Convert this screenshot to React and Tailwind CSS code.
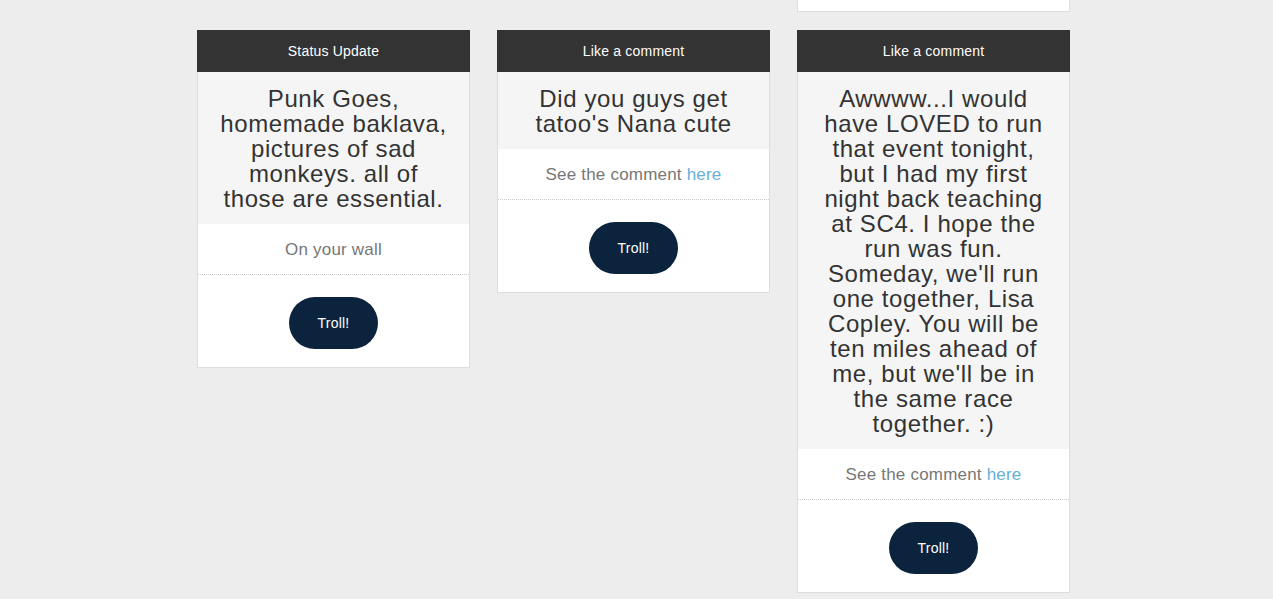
import React from 'react';

const cards = [
  [
    {
      title: 'Status Update',
      text: 'Punk Goes, homemade baklava, pictures of sad monkeys. all of those are essential.',
      wall: true,
    },
  ],
  [
    {
      title: 'Like a comment',
      text: "Did you guys get tatoo's Nana cute",
    },
  ],
  [
    {
      title: 'Like a comment',
      text: "Awwww...I would have LOVED to run that event tonight, but I had my first night back teaching at SC4. I hope the run was fun. Someday, we'll run one together, Lisa Copley. You will be ten miles ahead of me, but we'll be in the same race together. :)",
    },
  ],
];

const Card = ({ title, text, wall }) => (
  <div className="w-[273px] mb-[18px]">
    <div className="h-[42px] pt-px bg-[#333333] text-white text-[14px] tracking-[0.2px] flex items-center justify-center">
      {title}
    </div>
    <div className="border-x border-b border-[#dddddd] bg-white">
      <div className="bg-[#f5f5f5] text-[#333333] text-[24px] leading-[25px] tracking-[0.6px] text-center px-5 pt-[14px] pb-[13px]">
        {text}
      </div>
      <div className="h-[51px] pt-px border-b border-dotted border-[#cccccc] flex items-center justify-center text-[17px] tracking-[0.2px] text-[#777777]">
        {wall ? (
          'On your wall'
        ) : (
          <span>
            See the comment <a className="text-[#67afd8]">here</a>
          </span>
        )}
      </div>
      <div className="flex justify-center pt-[22px] pb-[18px]">
        <button className="w-[89px] h-[52px] rounded-full bg-[#0c233d] text-white text-[14px] tracking-[0.2px]">
          Troll!
        </button>
      </div>
    </div>
  </div>
);

export default function App() {
  return (
    <div
      className="min-h-screen bg-[#ededed] overflow-hidden"
      style={{ fontFamily: '"Liberation Sans", Arial, sans-serif' }}
    >
      <div className="flex gap-[27px] pl-[197px]">
        {cards.map((col, i) => (
          <div key={i} className={i === 2 ? '' : 'pt-[30px]'}>
            {i === 2 && (
              <div className="w-[273px] h-[12px] bg-white border-x border-b border-[#dddddd] mb-[18px]" />
            )}
            {col.map((c, j) => (
              <Card key={j} {...c} />
            ))}
          </div>
        ))}
      </div>
    </div>
  );
}
